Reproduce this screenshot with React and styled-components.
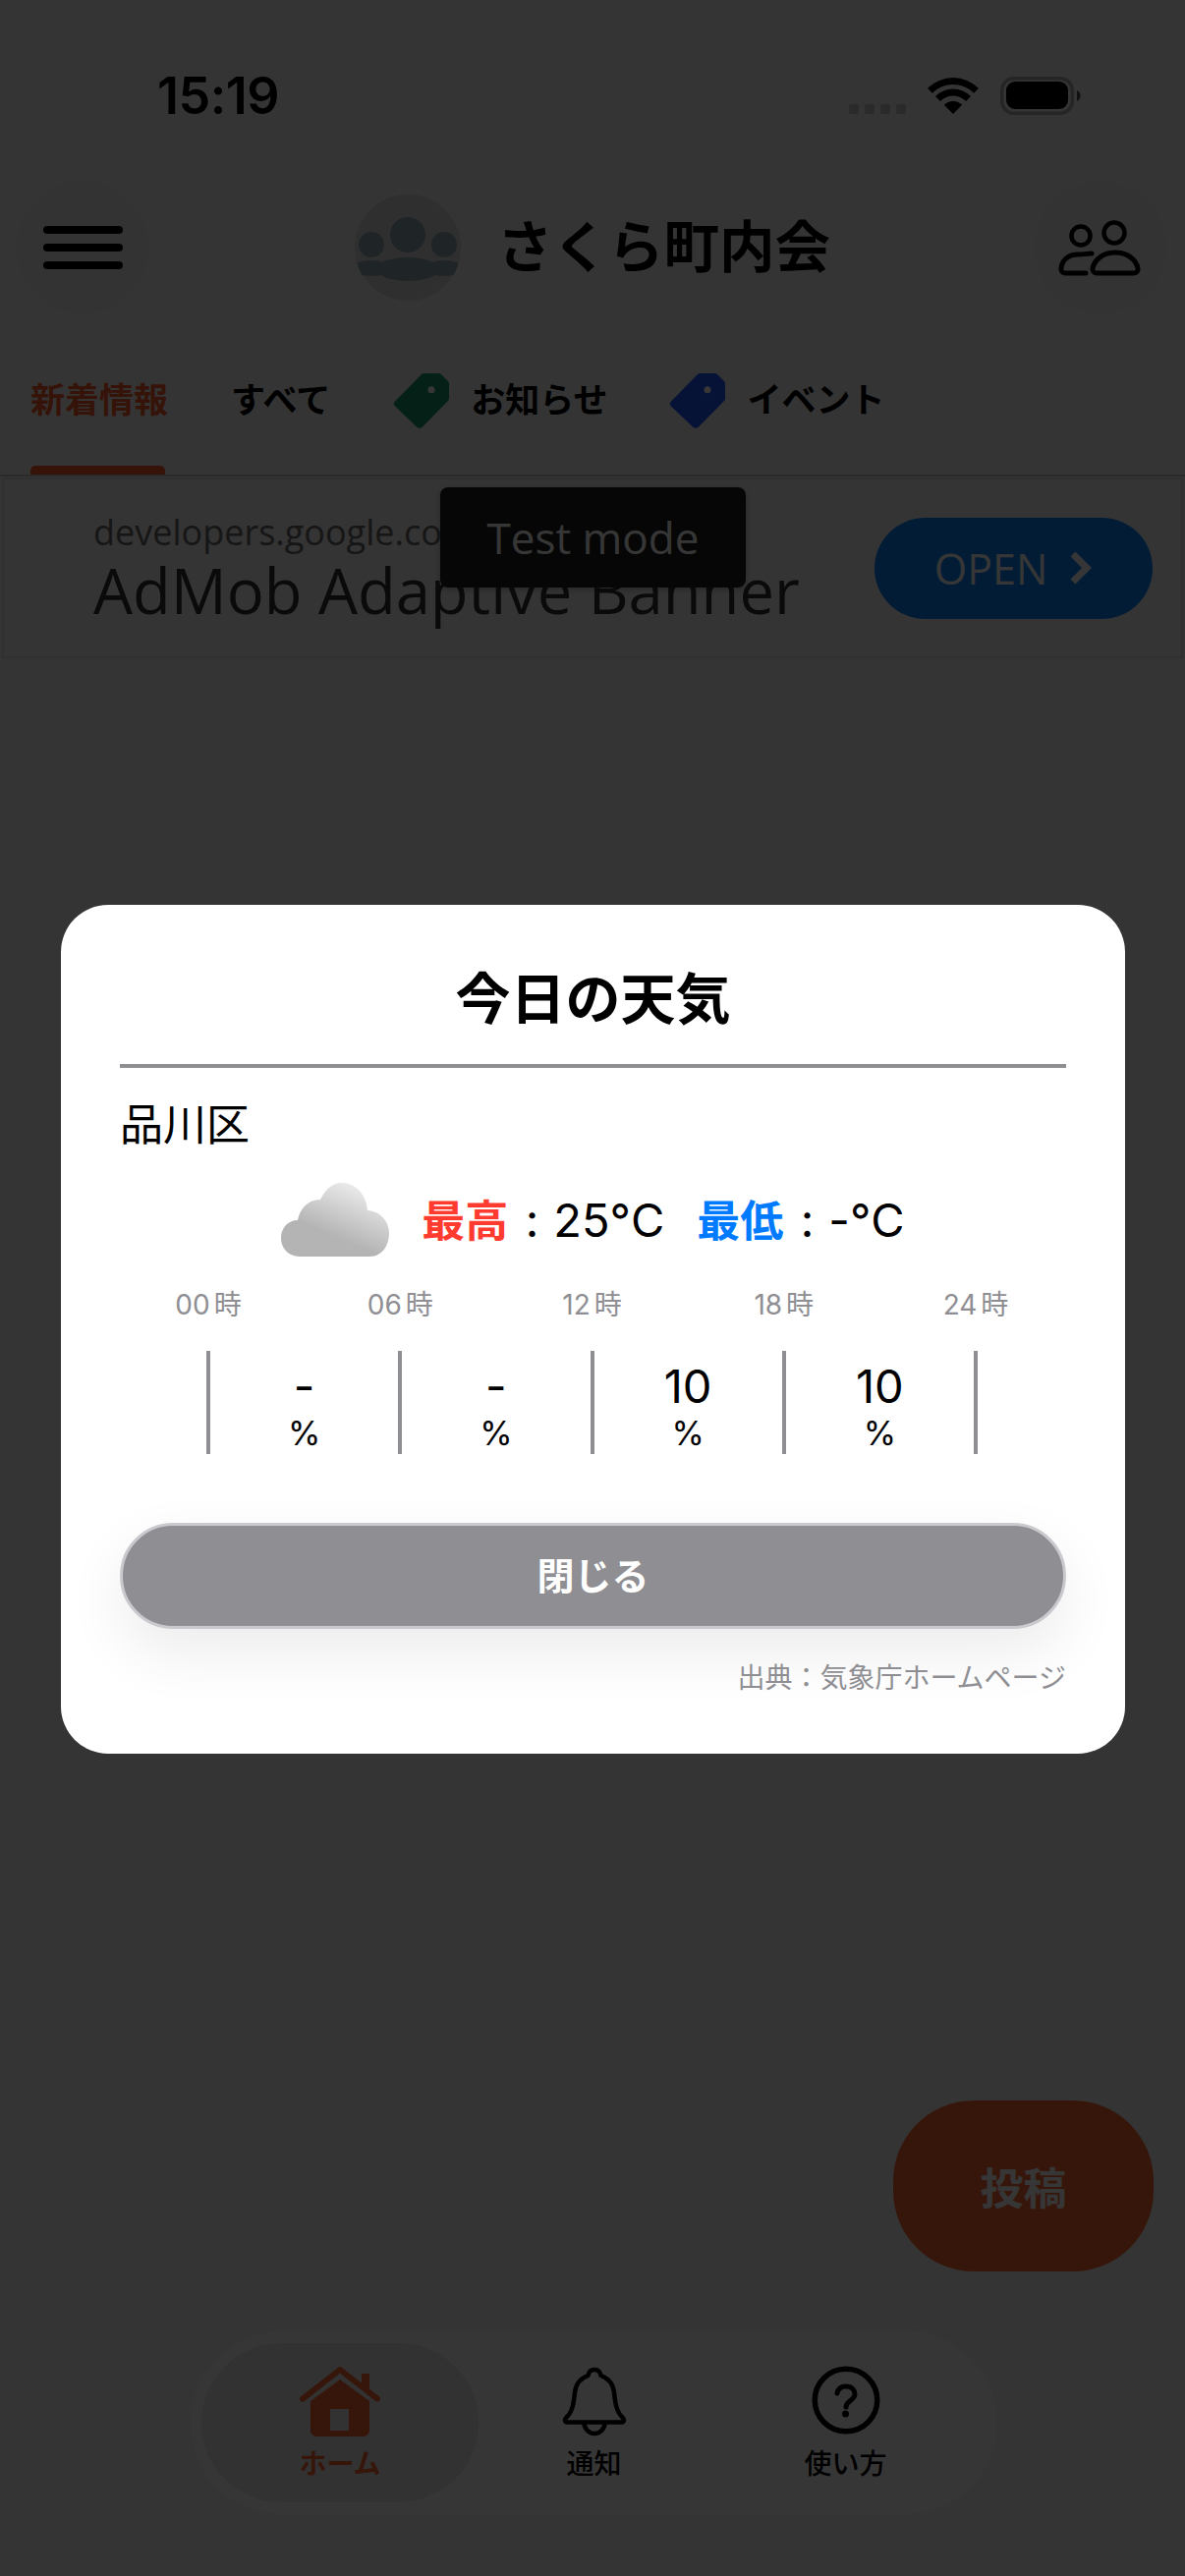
import styled, { createGlobalStyle } from "styled-components";

const GlobalStyle = createGlobalStyle`
  html, body { margin: 0; padding: 0; background: #f5f5f5; }
  body { font-family: Inter, "Noto Sans CJK JP", sans-serif; }
`;

const hours = ["00", "06", "12", "18", "24"];
const rain = ["-", "-", "10", "10"];

const tabs = [
  { label: "新着情報", active: true },
  { label: "すべて", gap: 64 },
  { label: "お知らせ", tag: "#18986a", gap: 64 },
  { label: "イベント", tag: "#1e58ff", gap: 63 },
];

function TagIcon({ color }) {
  return (
    <svg width="58" height="58" viewBox="0 0 58 58">
      <path
        d="M32 2 H46 a4 4 0 0 1 3 1 L56 10 a4 4 0 0 1 1 3 V27 a4 4 0 0 1 -1 3 L30 56.500 a4 4 0 0 1 -6 0 L2 35.500 a3.500 3.500 0 0 1 0 -5 L29 3 a4 4 0 0 1 3 -1 Z"
        fill={color}
      />
      <circle cx="39" cy="18.700" r="3.500" fill="#fff" />
    </svg>
  );
}

function App() {
  return (
    <>
      <GlobalStyle />
      <Page>
        <StatusBar>
          <Clock>15:19</Clock>
          <StatusIcons>
            <svg width="58" height="11" viewBox="0 0 58 11">
              {[0, 16, 32, 48].map((x) => (
                <rect key={x} x={x} y="0" width="10" height="10" rx="3" fill="#c4c4c4" />
              ))}
            </svg>
            <svg width="52" height="38" viewBox="0 0 52 38">
              <path d="M0 10.800 A37 37 0 0 1 52 10.800 L47.200 15.800 A30 30 0 0 0 4.800 15.800 Z" fill="#000" />
              <path d="M8 19 A25.500 25.500 0 0 1 44 19 L39.100 23.900 A18.500 18.500 0 0 0 12.900 23.900 Z" fill="#000" />
              <path d="M26 37 L16.800 27.800 A13 13 0 0 1 35.200 27.800 Z" fill="#000" />
            </svg>
            <svg width="82" height="39" viewBox="0 0 82 39">
              <rect x="1.750" y="1.750" width="71.500" height="35.500" rx="12" fill="none" stroke="#b0b0b0" strokeWidth="3.500" />
              <rect x="6" y="5" width="63" height="28" rx="9" fill="#000" />
              <path d="M78 14 a6 6 0 0 1 0 11 Z" fill="#555" />
            </svg>
          </StatusIcons>
        </StatusBar>

        <Header>
          <RoundButton>
            <svg width="81" height="44" viewBox="0 0 81 44">
              <path d="M4 4 H77 M4 22 H77 M4 40 H77" stroke="#000" strokeWidth="8" strokeLinecap="round" />
            </svg>
          </RoundButton>
          <Brand>
            <LogoDisc>
              <svg width="108" height="108" viewBox="0 0 108 108">
                <circle cx="54" cy="41" r="18" fill="#94abb5" />
                <circle cx="17" cy="51" r="13" fill="#94abb5" />
                <circle cx="91" cy="51" r="13" fill="#94abb5" />
                <ellipse cx="54" cy="76" rx="32" ry="12" fill="#94abb5" />
                <ellipse cx="17" cy="75" rx="19" ry="8" fill="#94abb5" />
                <ellipse cx="91" cy="75" rx="19" ry="8" fill="#94abb5" />
                <path d="M0 72 H24 V81 H0 Z M84 72 H108 V81 H84 Z" fill="#94abb5" />
              </svg>
            </LogoDisc>
            <AppTitle>さくら町内会</AppTitle>
          </Brand>
          <RoundButton>
            <svg width="90" height="60" viewBox="0 0 90 60">
              <circle cx="25" cy="18" r="9.500" fill="none" stroke="#000" strokeWidth="4.500" />
              <circle cx="59" cy="15" r="10.500" fill="none" stroke="#000" strokeWidth="4.500" />
              <path d="M30 56 H9 a4 4 0 0 1 -4 -5 C6 42 13 37 22 37 C28 37 33 36 36 36" fill="none" stroke="#000" strokeWidth="5" strokeLinecap="round" />
              <path d="M41 56 a4 4 0 0 1 -4 -5 C39 42 48 35 60 35 C72 35 81 42 83 51 a4 4 0 0 1 -4 5 Z" fill="none" stroke="#000" strokeWidth="5" strokeLinejoin="round" />
            </svg>
          </RoundButton>
        </Header>

        <TabBar>
          {tabs.map((t) => (
            <Tab key={t.label} $gap={t.gap}>
              {t.tag && <TagIcon color={t.tag} />}
              <TabLabel $active={t.active}>{t.label}</TabLabel>
              {t.active && <TabUnderline />}
            </Tab>
          ))}
        </TabBar>

        <AdBanner>
          <AdText>
            <AdHost>developers.google.com</AdHost>
            <AdHeadline>AdMob Adaptive Banner</AdHeadline>
          </AdText>
          <AdButton>
            OPEN
            <svg width="24" height="34" viewBox="0 0 24 34">
              <path d="M4 3 L18 17 L4 31" fill="none" stroke="#fff" strokeWidth="7" />
            </svg>
          </AdButton>
          <TestBadge>Test mode</TestBadge>
        </AdBanner>

        <BottomArea>
          <PostButton>投稿</PostButton>
          <NavBar>
            <NavItem $active>
              <IconSlot>
                <svg width="84" height="74" viewBox="0 0 84 74">
                  <path d="M4 34.700 L42 5 L80 34.700" fill="none" stroke="#ff6a32" strokeWidth="6" strokeLinecap="round" strokeLinejoin="round" />
                  <path d="M64 19 V9 H72 V26 Z" fill="#ff6a32" />
                  <path
                    fillRule="evenodd"
                    d="M42 15 L72 37 V67 a6 6 0 0 1 -6 6 H18 a6 6 0 0 1 -6 -6 V37 Z M32 45 H51 V67 H32 Z"
                    fill="#ff6a32"
                  />
                </svg>
              </IconSlot>
              <NavLabel $active>ホーム</NavLabel>
            </NavItem>
            <NavItem>
              <IconSlot>
                <svg width="70" height="75" viewBox="0 0 70 75">
                  <path
                    d="M35 5 C39 5 41 8 41.500 11 C50 14 54 20 55 28 C56 38 57 48 64 54 C66 56 65 58.500 63 58.500 H7 C5 58.500 4 56 6 54 C13 48 14 38 15 28 C16 20 20 14 28.500 11 C29 8 31 5 35 5 Z"
                    fill="none" stroke="#000" strokeWidth="4.500" strokeLinejoin="round"
                  />
                  <path d="M24.500 59 A10.500 11 0 0 0 45.500 59" fill="none" stroke="#000" strokeWidth="4.500" />
                </svg>
              </IconSlot>
              <NavLabel>通知</NavLabel>
            </NavItem>
            <NavItem>
              <IconSlot>
                <svg width="72" height="72" viewBox="0 0 72 72">
                  <circle cx="36" cy="36" r="31.750" fill="none" stroke="#000" strokeWidth="5.500" />
                  <path d="M27 29 C28 24 31 22 36 22 C42 22 45 26 45 30 C45 36 36 37 36 43" fill="none" stroke="#000" strokeWidth="5" strokeLinecap="round" />
                  <circle cx="35.500" cy="50" r="3.500" fill="#000" />
                </svg>
              </IconSlot>
              <NavLabel>使い方</NavLabel>
            </NavItem>
          </NavBar>
        </BottomArea>

        <Overlay>
          <Modal>
            <ModalTitle>今日の天気</ModalTitle>
            <Place>品川区</Place>
            <Summary>
              <svg width="110" height="75" viewBox="0 0 110 75">
                <defs>
                  <linearGradient id="cloud" x1="85%" y1="5%" x2="45%" y2="70%">
                    <stop offset="0" stopColor="#f0f0f0" />
                    <stop offset="1" stopColor="#b4b4b4" />
                  </linearGradient>
                </defs>
                <path
                  d="M19 75 C8 75 0 67 0 56 C0 46 7 38 17 38 C19 26 28 17 40 17 C45 7 52 0 62 0 C76 0 87 12 88 28 C101 29 110 39 110 51 C110 65 102 75 90 75 Z"
                  fill="url(#cloud)"
                />
              </svg>
              <Temps>
                <TempLabel $color="#ff3b30">最高</TempLabel>
                <Colon>:</Colon>25°C
              </Temps>
              <Temps>
                <TempLabel $color="#007aff">最低</TempLabel>
                <Colon>:</Colon>-°C
              </Temps>
            </Summary>
            <HourRow>
              {hours.map((h) => (
                <HourCell key={h}>
                  <HourNum>{h}</HourNum>時
                </HourCell>
              ))}
            </HourRow>
            <RainRow>
              {rain.map((r, i) => (
                <RainCell key={i}>
                  <RainValue>{r}</RainValue>
                  <RainUnit>%</RainUnit>
                </RainCell>
              ))}
            </RainRow>
            <CloseButton>閉じる</CloseButton>
            <Source>出典：気象庁ホームページ</Source>
          </Modal>
        </Overlay>
      </Page>
    </>
  );
}

export default App;

const Page = styled.div`
  position: relative;
  width: 1206px;
  height: 2622px;
  overflow: hidden;
  display: flex;
  flex-direction: column;
  background: #f5f5f5;
  color: #000;
`;

const StatusBar = styled.div`
  height: 194px;
  flex-shrink: 0;
  padding: 67px 106px 0 160px;
  box-sizing: border-box;
  display: flex;
  justify-content: space-between;
  align-items: flex-start;
`;

const Clock = styled.div`
  margin-top: 1px;
  font-size: 52px;
  font-weight: 600;
  line-height: 60px;
  letter-spacing: -0.5px;
`;

const StatusIcons = styled.div`
  display: flex;
  align-items: flex-end;
  gap: 22px;
  margin-top: 11px;
`;

const Header = styled.div`
  height: 116px;
  flex-shrink: 0;
  padding: 0 21px 0 19px;
  display: flex;
  align-items: center;
  justify-content: space-between;
`;

const RoundButton = styled.div`
  width: 130px;
  height: 130px;
  border-radius: 50%;
  background: #efefef;
  box-shadow: 0 0 20px rgba(0, 0, 0, 0.03);
  display: flex;
  align-items: center;
  justify-content: center;
`;

const Brand = styled.div`
  display: flex;
  align-items: center;
  gap: 37px;
  margin-left: 2px;
`;

const LogoDisc = styled.div`
  width: 108px;
  height: 108px;
  border-radius: 50%;
  overflow: hidden;
  background: #dcdcdc;
  svg {
    display: block;
  }
`;

const AppTitle = styled.div`
  font-size: 56.500px;
  font-weight: 700;
  line-height: 66px;
`;

const TabBar = styled.div`
  height: 175px;
  flex-shrink: 0;
  box-sizing: border-box;
  padding: 68px 0 0 31px;
  display: flex;
  align-items: flex-start;
  border-bottom: 2px solid #c8c8c8;
`;

const Tab = styled.div`
  position: relative;
  height: 58px;
  display: flex;
  align-items: center;
  gap: 21px;
  margin-left: ${(p) => p.$gap || 0}px;
`;

const TabLabel = styled.span`
  font-size: 35px;
  font-weight: 700;
  margin-bottom: 6px;
  color: ${(p) => (p.$active ? "#ff5a28" : "#000")};
`;

const TabUnderline = styled.div`
  position: absolute;
  left: 0;
  width: 137px;
  top: 96px;
  height: 9px;
  border-radius: 5px 5px 0 0;
  background: #ff5a28;
`;

const AdBanner = styled.div`
  position: relative;
  margin: 1px 2px 0;
  height: 184px;
  flex-shrink: 0;
  box-sizing: border-box;
  border: 2px solid #e4e4e4;
  padding: 0 29px 0 91px;
  display: flex;
  align-items: center;
  justify-content: space-between;
  font-family: "Open Sans", sans-serif;
`;

const AdText = styled.div`
  display: flex;
  flex-direction: column;
`;

const AdHost = styled.div`
  font-size: 36px;
  line-height: 46px;
  color: #6a6a6a;
`;

const AdHeadline = styled.div`
  font-size: 63.300px;
  line-height: 72px;
  color: #333;
`;

const AdButton = styled.div`
  width: 283px;
  height: 103px;
  border-radius: 52px;
  background: #0a84ff;
  color: #fff;
  font-size: 43px;
  display: flex;
  align-items: center;
  justify-content: center;
  gap: 22px;
`;

const TestBadge = styled.div`
  position: absolute;
  left: 444px;
  top: 8px;
  width: 311px;
  height: 102px;
  border-radius: 8px;
  background: #1c1c1c;
  color: #fff;
  font-size: 44px;
  display: flex;
  align-items: center;
  justify-content: center;
  box-shadow: 0 2px 6px rgba(0, 0, 0, 0.25);
`;

const BottomArea = styled.div`
  margin-top: auto;
  padding: 0 32px 63px 194px;
  display: flex;
  flex-direction: column;
`;

const PostButton = styled.div`
  align-self: flex-end;
  width: 265px;
  height: 174px;
  border-radius: 82px;
  background: #ff6a32;
  color: #fff;
  font-size: 44px;
  font-weight: 700;
  display: flex;
  align-items: center;
  justify-content: center;
  margin-bottom: 61px;
`;

const NavBar = styled.div`
  width: 821px;
  height: 186px;
  box-sizing: border-box;
  border-radius: 93px;
  background: #ffffff;
  padding: 12px 11px;
  display: flex;
  align-items: center;
`;

const NavItem = styled.div`
  width: ${(p) => (p.$active ? 282 : 256)}px;
  margin-right: ${(p) => (p.$active ? -10.5 : 0)}px;
  height: 162px;
  border-radius: 81px;
  background: ${(p) => (p.$active ? "#ebebeb" : "transparent")};
  display: flex;
  flex-direction: column;
  align-items: center;
  padding-top: 22px;
  box-sizing: border-box;
`;

const IconSlot = styled.div`
  height: 75px;
  display: flex;
  align-items: flex-start;
  justify-content: center;
`;

const NavLabel = styled.div`
  margin-top: 7px;
  font-size: 28px;
  line-height: 38px;
  font-weight: ${(p) => (p.$active ? 700 : 500)};
  color: ${(p) => (p.$active ? "#ff6a32" : "#000")};
`;

const Overlay = styled.div`
  position: absolute;
  inset: 0;
  background: rgba(0, 0, 0, 0.79);
  padding: 921px 61px 0 62px;
  box-sizing: border-box;
`;

const Modal = styled.div`
  height: 864px;
  box-sizing: border-box;
  border-radius: 48px;
  background: #fff;
  padding: 60px 60px 0;
  display: flex;
  flex-direction: column;
`;

const ModalTitle = styled.div`
  height: 102px;
  font-size: 56px;
  line-height: 72px;
  font-weight: 700;
  text-align: center;
  border-bottom: 4px solid #8e8e93;
`;

const Place = styled.div`
  margin-top: 30px;
  font-size: 44px;
  line-height: 56px;
`;

const Summary = styled.div`
  margin-top: 30px;
  height: 76px;
  display: flex;
  align-items: flex-end;
  justify-content: center;
  gap: 33px;
`;

const Temps = styled.div`
  font-size: 47px;
  line-height: 56px;
  margin-bottom: 8px;
  white-space: nowrap;
`;

const TempLabel = styled.span`
  font-size: 44px;
  color: ${(p) => p.$color};
  font-weight: 700;
`;

const Colon = styled.span`
  margin: 0 15px 0 17.500px;
`;

const HourRow = styled.div`
  margin-top: 31px;
  padding: 0 0 0 90px;
  display: grid;
  grid-template-columns: repeat(5, 195.250px);
  font-size: 28px;
  line-height: 36px;
  color: #8e8e93;
`;

const HourCell = styled.div`
  width: 100px;
  margin-left: -50px;
  text-align: center;
`;

const HourNum = styled.span`
  margin-right: 4px;
`;

const RainRow = styled.div`
  margin-top: 29px;
  margin-left: 88px;
  display: flex;
  border-right: 4px solid #8e8e93;
  width: max-content;
`;

const RainCell = styled.div`
  width: 191.250px;
  height: 105px;
  border-left: 4px solid #8e8e93;
  display: flex;
  flex-direction: column;
  align-items: center;
`;

const RainValue = styled.div`
  margin-top: 9px;
  font-size: 47px;
  line-height: 54px;
`;

const RainUnit = styled.div`
  margin-top: 1px;
  font-size: 34px;
  line-height: 40px;
`;

const CloseButton = styled.div`
  margin-top: 70px;
  height: 108px;
  box-sizing: border-box;
  border-radius: 54px;
  border: 3px solid #c9c9ce;
  background: #8e8e93;
  color: #fff;
  font-size: 38px;
  font-weight: 700;
  padding-bottom: 5px;
  display: flex;
  align-items: center;
  justify-content: center;
  box-shadow: 0 24px 60px rgba(0, 0, 0, 0.08);
`;

const Source = styled.div`
  margin-top: 32px;
  font-size: 28px;
  line-height: 36px;
  text-align: right;
  color: #8e8e93;
`;
